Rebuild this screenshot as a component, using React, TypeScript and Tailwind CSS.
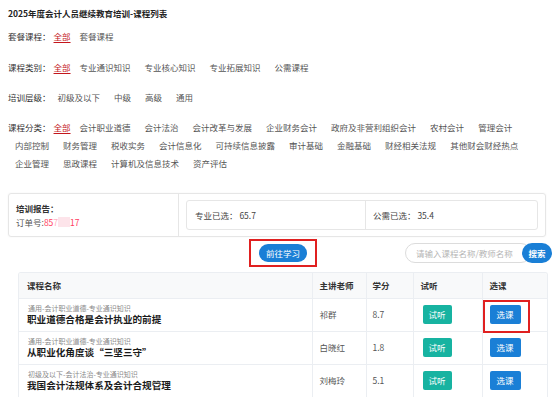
const taocan = ['套餐课程'];
const leibie = ['专业通识知识', '专业核心知识', '专业拓展知识', '公需课程'];
const cengji = ['初级及以下', '中级', '高级', '通用'];
const fenlei = [
  '会计职业道德', '会计法治', '会计改革与发展', '企业财务会计', '政府及非营利组织会计', '农村会计', '管理会计',
  '内部控制', '财务管理', '税收实务', '会计信息化', '可持续信息披露', '审计基础', '金融基础', '财经相关法规', '其他财会财经热点',
  '企业管理', '思政课程', '计算机及信息技术', '资产评估',
];

const courses = [
  { tag: '通用-会计职业道德-专业通识知识', name: '职业道德合格是会计执业的前提', teacher: '祁群', credit: '8.7' },
  { tag: '通用-会计职业道德-专业通识知识', name: '从职业化角度谈“三坚三守”', teacher: '白晓红', credit: '1.8' },
  { tag: '初级及以下-会计法治-专业通识知识', name: '我国会计法规体系及会计合规管理', teacher: '刘梅玲', credit: '5.1' },
];

function FilterRow({ label, items, all = true, className = '' }: { label: string; items: string[]; all?: boolean; className?: string }) {
  return (
    <div className={`flex flex-wrap pl-2 pr-2 leading-[18px] ${className}`}>
      <span className="text-[#333]">{label}</span>
      {all && <span className="ml-[3px] mr-[2px] text-[#c4161c] underline underline-offset-2">全部</span>}
      {items.map((it) => (
        <span key={it} className="mx-[7px] text-[#555]">{it}</span>
      ))}
    </div>
  );
}

export default function App() {
  return (
    <div className="w-[554px] h-[397px] overflow-hidden bg-white text-[8.5px] text-[#555] font-['Noto_Sans_CJK_SC',sans-serif]">
      <div className="pl-2 pt-[7px] leading-[12px] font-bold text-[#222]">2025年度会计人员继续教育培训-课程列表</div>

      <FilterRow label="套餐课程：" items={taocan} className="mt-2" />
      <FilterRow label="课程类别：" items={leibie} className="mt-[13px]" />
      <FilterRow label="培训层级：" items={cengji} all={false} className="mt-3" />
      <FilterRow label="课程分类：" items={fenlei} className="mt-3" />

      <div className="mx-2 mt-[21px] flex h-[44px] rounded-[3px] border border-[#e6e6e6] shadow-[0_0_2px_rgba(0,0,0,0.06)]">
        <div className="flex w-[170px] flex-col justify-center gap-[3px] border-r border-[#e6e6e6] pl-[7px] leading-[11px]">
          <div className="font-bold text-[#333]">培训报告：</div>
          <div className="flex items-center text-[#555]">
            订单号:<span className="text-[#ff3d5e]">85</span>
            <span className="text-[#ffb3c2]">7</span>
            <span className="inline-block h-[10px] w-[12px] bg-[#fde4ea]" />
            <span className="text-[#ff3d5e]">17</span>
          </div>
        </div>
        <div className="flex flex-1 items-center px-[7px]">
          <div className="flex h-[30px] w-full rounded-[3px] border border-[#e6e6e6]">
            <div className="flex w-[179px] items-center border-r border-[#e6e6e6] pl-[8px] text-[#444]">专业已选： 65.7</div>
            <div className="flex flex-1 items-center pl-[7px] text-[#444]">公需已选： 35.4</div>
          </div>
        </div>
      </div>

      <div className="ml-[14px] mr-[2px] mt-[2px] grid h-[28px] grid-cols-[1fr_auto_1fr] items-center">
        <div />
        <div className="flex h-[28px] w-[68px] items-center justify-center border-2 border-[#e02020]">
          <div className="flex h-[18px] w-[48px] items-center justify-center rounded-full bg-[#1a7fd6] text-white">前往学习</div>
        </div>
        <div className="flex justify-end">
          <div className="flex items-center">
            <div className="flex h-[20px] w-[126px] items-center rounded-full border border-[#dcdcdc] pl-[10px] text-[#b5b5b5]">请输入课程名称/教师名称</div>
            <div className="-ml-[9px] flex h-[20px] w-[30px] items-center justify-center rounded-full bg-[#1a7fd6] font-bold text-white">搜索</div>
          </div>
        </div>
      </div>

      <div className="ml-[18px] mt-[5px] w-[530px] overflow-hidden rounded-t-[3px] border border-b-0 border-[#ebeef2]">
        <table className="w-full table-fixed border-collapse">
          <colgroup>
            <col className="w-[293px]" />
            <col className="w-[54px]" />
            <col className="w-[47px]" />
            <col className="w-[69px]" />
            <col className="w-[66px]" />
          </colgroup>
          <thead>
            <tr className="h-[25px] bg-[#f8f9fa] text-left font-bold text-[#333]">
              <th className="pl-[8px]">课程名称</th>
              <th className="border-l border-[#ebeef2] pl-[7px]">主讲老师</th>
              <th className="border-l border-[#ebeef2] pl-[6px]">学分</th>
              <th className="border-l border-[#ebeef2] pl-[7px]">试听</th>
              <th className="border-l border-[#ebeef2] pl-[7px]">选课</th>
            </tr>
          </thead>
          <tbody>
            {courses.map((c, i) => (
              <tr key={c.name} className="h-[33px] border-t border-[#ebeef2]">
                <td className="pl-[8px]">
                  <div className="pl-[1px] text-[7px] leading-[9px] text-[#8a8a8a]">{c.tag}</div>
                  <div className="text-[9.6px] font-bold leading-[13px] text-[#1a1a1a]">{c.name}</div>
                </td>
                <td className="border-l border-[#ebeef2] pl-[7px] text-[#555]">{c.teacher}</td>
                <td className="border-l border-[#ebeef2] pl-[6px] text-[#555]">{c.credit}</td>
                <td className="border-l border-[#ebeef2] pl-[9px]">
                  <div className="flex h-[19px] w-[29px] items-center justify-center rounded-[2px] bg-[#17b3a1] text-white">试听</div>
                </td>
                <td className="relative border-l border-[#ebeef2] pl-[7px]">
                  <div className="flex h-[19px] w-[31px] items-center justify-center rounded-[2px] bg-[#1a7fd6] text-white">选课</div>
                  {i === 0 && <div className="absolute left-0 top-[1px] h-[33px] w-[47px] border-2 border-[#e02020]" />}
                </td>
              </tr>
            ))}
          </tbody>
        </table>
      </div>
    </div>
  );
}
